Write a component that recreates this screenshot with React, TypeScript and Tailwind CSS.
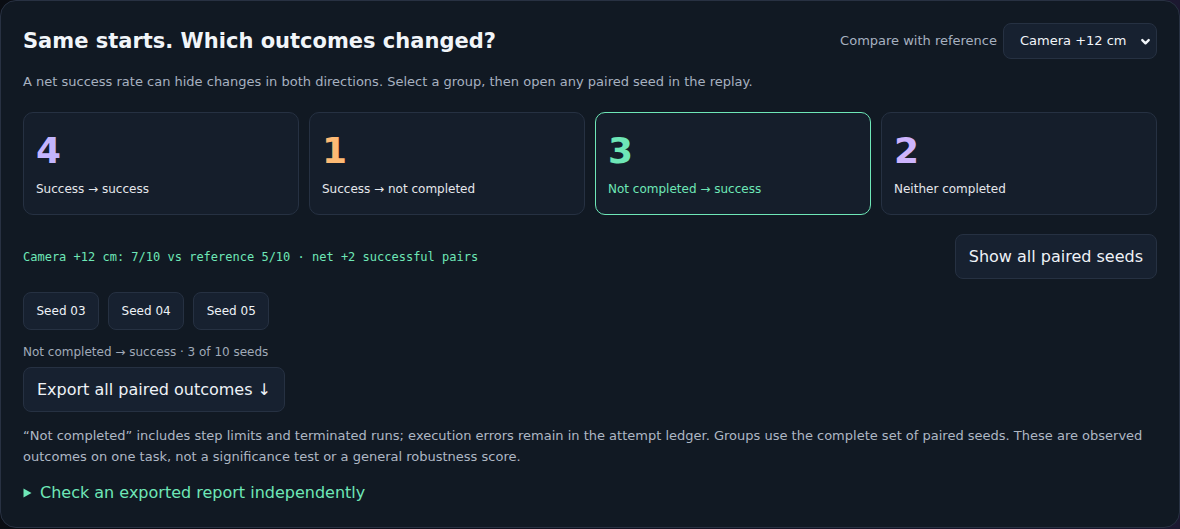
import React from 'react';

const groups = [
  { count: 4, label: 'Success → success', color: 'text-[#c4b5fd]', selected: false },
  { count: 1, label: 'Success → not completed', color: 'text-[#fdba74]', selected: false },
  { count: 3, label: 'Not completed → success', color: 'text-[#6ee7b7]', selected: true },
  { count: 2, label: 'Neither completed', color: 'text-[#cdb4fd]', selected: false },
];

const seeds = ['Seed 03', 'Seed 04', 'Seed 05'];

export default function App() {
  return (
    <div className="min-h-screen w-full bg-gradient-to-r from-[#0a0d13] to-[#1c1830] font-['DejaVu_Sans',sans-serif]">
      <section className="rounded-2xl border border-[#283142] bg-[#111923] px-[22px] pt-[22px] pb-[22px] text-[#e5e7eb]">
        {/* Header */}
        <div className="flex h-9 items-center justify-between">
          <h1 className="text-[21px] font-bold leading-7 text-[#f1f5f9]">Same starts. Which outcomes changed?</h1>
          <div className="flex items-center gap-[6px]">
            <span className="text-[13px] text-[#a7b1c0]">Compare with reference</span>
            <div className="flex h-9 w-[154px] items-center justify-between rounded-lg border border-[#263142] bg-[#172130] pl-4 pr-[5px]">
              <span className="text-[13px] text-[#f1f5f9]">Camera +12 cm</span>
              <svg width="11" height="11" viewBox="0 0 12 12" fill="none" stroke="#f1f5f9" strokeWidth="2.6" strokeLinecap="round" strokeLinejoin="round">
                <path d="M2.5 4.5 6 8l3.5-3.5" />
              </svg>
            </div>
          </div>
        </div>

        <p className="mt-[13px] text-[13px] leading-5 text-[#a7b1c0]">
          A net success rate can hide changes in both directions. Select a group, then open any paired seed in the replay.
        </p>

        {/* Outcome groups */}
        <div className="mt-5 grid grid-cols-4 gap-[10px]">
          {groups.map(g => (
            <button
              key={g.label}
              className={`flex flex-col items-start rounded-[10px] border bg-[#151e2b] px-3 pt-4 pb-[15px] text-left ${
                g.selected ? 'border-[#6ee7b7]' : 'border-[#263142]'
              }`}
            >
              <span className={`text-[36px] font-bold leading-[44px] ${g.color}`}>{g.count}</span>
              <span className={`mt-[6px] text-[12px] leading-5 ${g.selected ? 'text-[#6ee7b7]' : 'text-[#e5e7eb]'}`}>
                {g.label}
              </span>
            </button>
          ))}
        </div>

        <div className="mt-[19px] flex items-center justify-between">
          <span className="font-['DejaVu_Sans_Mono',monospace] text-[12px] text-[#6ee7b7]">
            Camera +12 cm: 7/10 vs reference 5/10 · net +2 successful pairs
          </span>
          <button className="rounded-lg border border-[#263142] bg-[#172130] px-[13px] py-[10px] text-[16px] leading-[23px] text-[#eef2f7]">
            Show all paired seeds
          </button>
        </div>

        <div className="mt-[13px] flex gap-[9px]">
          {seeds.map(s => (
            <button key={s} className="rounded-lg border border-[#263142] bg-[#172130] px-[12.5px] py-[9px] text-[12px] leading-[18px] text-[#eef2f7]">
              {s}
            </button>
          ))}
        </div>

        <p className="mt-[13px] text-[12px] leading-[18px] text-[#a0aab8]">Not completed → success · 3 of 10 seeds</p>

        <button className="mt-[6px] rounded-lg border border-[#263142] bg-[#172130] px-[13px] py-[10px] text-[16px] leading-[23px] text-[#eef2f7]">
          Export all paired outcomes ↓
        </button>

        <p className="mt-[13px] text-[13px] leading-[21px] text-[#aeb7c4]">
          “Not completed” includes step limits and terminated runs; execution errors remain in the attempt ledger. Groups use the complete set of paired seeds. These are observed outcomes on one task, not a significance test or a general robustness score.
        </p>

        <details className="mt-[14px]">
          <summary className="flex list-none items-center gap-[8px] text-[16px] leading-6 text-[#6ee7b7]">
            <svg width="9" height="10" viewBox="0 0 9 10" fill="#6ee7b7">
              <path d="M0.5 0.5 8.5 5 0.5 9.5Z" />
            </svg>
            Check an exported report independently
          </summary>
        </details>
      </section>
    </div>
  );
}
